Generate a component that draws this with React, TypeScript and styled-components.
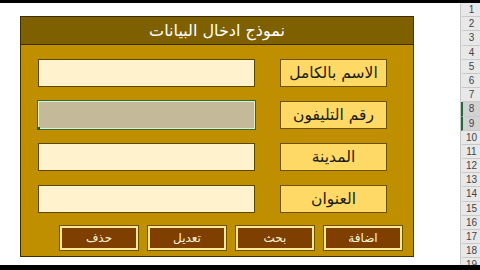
import React from "react";
import styled, { createGlobalStyle } from "styled-components";

const Global = createGlobalStyle`
  html, body {
    margin: 0;
    padding: 0;
    background: #fff;
    width: 480px;
    height: 270px;
    overflow: hidden;
    font-family: "DejaVu Sans", "Noto Sans", sans-serif;
  }
`;

const Screen = styled.div`
  width: 480px;
  height: 270px;
  display: flex;
  flex-direction: column;
  background: #fff;
`;

const Bar = styled.div<{ h: number }>`
  height: ${p => p.h}px;
  background: #000;
  flex-shrink: 0;
`;

const Middle = styled.div`
  flex: 1;
  display: flex;
  min-height: 0;
`;

const Sheet = styled.div`
  flex: 1;
  padding: 13px 0 0 20px;
`;

const Panel = styled.div`
  width: 394px;
  height: 241px;
  box-sizing: border-box;
  background: #bf8f00;
  border: 1px solid #3d2e00;
  display: flex;
  flex-direction: column;
`;

const Title = styled.div`
  height: 28px;
  box-sizing: border-box;
  background: #7f6000;
  border-bottom: 1px solid #3d2e00;
  color: #fff;
  font-size: 16px;
  display: flex;
  align-items: center;
  justify-content: center;
  direction: rtl;
`;

const Body = styled.div`
  flex: 1;
  display: flex;
  flex-direction: column;
  padding: 14px 26px 0 0;
  gap: 14px;
  direction: rtl;
`;

const Row = styled.div`
  display: flex;
  gap: 25px;
  height: 28px;
`;

const Label = styled.div`
  width: 107px;
  box-sizing: border-box;
  background: #ffd966;
  border: 1px solid #6b5200;
  display: flex;
  align-items: center;
  justify-content: center;
  font-size: 15.5px;
  color: #1a1a1a;
`;

const Field = styled.div<{ selected?: boolean }>`
  position: relative;
  width: 217px;
  box-sizing: border-box;
  background: ${p => (p.selected ? "#c4ba9a" : "#fff2cc")};
  border: 1px solid ${p => (p.selected ? "#e4ecd0" : "#5c4600")};
  box-shadow: ${p => (p.selected ? "0 0 0 1px #2e6b2e" : "none")};
`;

const Handle = styled.span`
  position: absolute;
  left: -2px;
  bottom: -2px;
  width: 3px;
  height: 3px;
  background: #1f5c2a;
`;

const Buttons = styled.div`
  display: flex;
  gap: 10px;
  height: 24px;
  margin-top: -1px;
  margin-right: -15px;
`;

const Btn = styled.div`
  width: 78px;
  box-sizing: border-box;
  background: #7e3f00;
  border: 2px solid #ffe699;
  outline: 1px solid #6b5200;
  color: #fff6dc;
  font-size: 12px;
  display: flex;
  align-items: center;
  justify-content: center;
`;

const Headers = styled.div`
  width: 19px;
  margin-left: auto;
  display: flex;
  flex-direction: column;
  border-left: 1px solid #c8c8c8;
  background: #e8e8e8;
`;

const RowNum = styled.div<{ active?: boolean }>`
  height: 14.2px;
  flex-shrink: 0;
  box-sizing: border-box;
  border-bottom: 1px solid #c9c9c9;
  border-left: 2px solid ${p => (p.active ? "#1d6b3a" : "transparent")};
  background: ${p => (p.active ? "#d2d2d2" : "#e8e8e8")};
  color: #444;
  font-family: "Liberation Sans", Arial, sans-serif;
  font-size: 10px;
  line-height: 13px;
  text-align: center;
`;

const fields = [
  { label: "الاسم بالكامل" },
  { label: "رقم التليفون", selected: true },
  { label: "المدينة" },
  { label: "العنوان" },
];

const actions = ["اضافة", "بحث", "تعديل", "حذف"];

export default function App() {
  return (
    <Screen>
      <Global />
      <Bar h={3} />
      <Middle>
        <Sheet>
          <Panel>
            <Title>نموذج ادخال البيانات</Title>
            <Body>
              {fields.map((f, i) => (
                <Row key={i}>
                  <Label>{f.label}</Label>
                  <Field selected={f.selected}>{f.selected && <Handle />}</Field>
                </Row>
              ))}
              <Buttons>
                {actions.map(a => (
                  <Btn key={a}>{a}</Btn>
                ))}
              </Buttons>
            </Body>
          </Panel>
        </Sheet>
        <Headers>
          {Array.from({ length: 19 }, (_, i) => (
            <RowNum key={i} active={i === 7 || i === 8}>
              {i + 1}
            </RowNum>
          ))}
        </Headers>
      </Middle>
      <Bar h={5} />
    </Screen>
  );
}
